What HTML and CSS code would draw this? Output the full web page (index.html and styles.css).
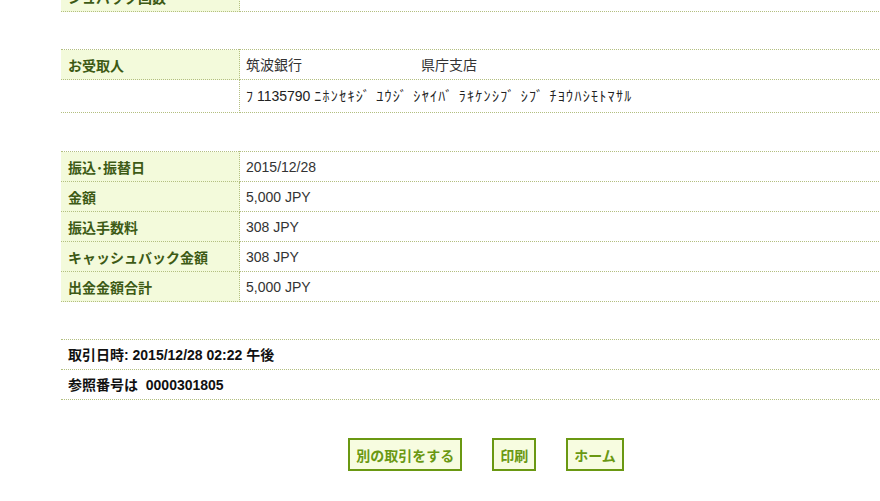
FILE: index.html
```html
<!DOCTYPE html>
<html lang="ja">
<head>
<meta charset="utf-8">
<title>振込確認</title>
<link rel="stylesheet" href="styles.css">
</head>
<body>
<div class="page">
  <table class="info">
    <tr><th>シュバック回数</th><td></td></tr>
  </table>

  <table class="info">
    <tr><th>お受取人</th><td><span class="bank">筑波銀行</span>県庁支店</td></tr>
    <tr class="tall"><th class="blank"></th><td class="kana">ﾌ 1135790 <span class="kk">ﾆﾎﾝｾｷｼﾞ ﾕｳｼﾞ ｼﾔｲﾊﾞ ﾗｷｹﾝｼﾌﾞ ｼﾌﾞ ﾁﾖｳﾊｼﾓﾄﾏｻﾙ</span></td></tr>
  </table>

  <table class="info gap38">
    <tr><th>振込･振替日</th><td>2015/12/28</td></tr>
    <tr><th>金額</th><td>5,000 JPY</td></tr>
    <tr><th>振込手数料</th><td>308 JPY</td></tr>
    <tr><th>キャッシュバック金額</th><td>308 JPY</td></tr>
    <tr><th>出金金額合計</th><td>5,000 JPY</td></tr>
  </table>

  <table class="info plain">
    <tr><td>取引日時: 2015/12/28 02:22 午後</td></tr>
    <tr><td>参照番号は&nbsp; 0000301805</td></tr>
  </table>

  <div class="actions">
    <button class="btn" type="button">別の取引をする</button>
    <button class="btn" type="button">印刷</button>
    <button class="btn" type="button">ホーム</button>
  </div>
</div>
</body>
</html>
```
FILE: styles.css
```css
html, body {
  margin: 0;
  padding: 0;
  background: #ffffff;
}
body {
  overflow: hidden;
  font-family: "Liberation Sans", "Noto Sans CJK JP", sans-serif;
  font-size: 14px;
  color: #333333;
}
.page {
  width: 850px;
  margin-left: 61px;
  margin-top: -19px;
  display: flex;
  flex-direction: column;
  gap: 37px;
}
.info {
  width: 100%;
  border-collapse: collapse;
  border-top: 1px dotted #b3bf80;
}
.info.gap38 {
  margin-top: 1px;
}
.info tr {
  height: 30px;
}
.info tr.tall {
  height: 33px;
}
.info th,
.info td {
  border-bottom: 1px dotted #b3bf80;
  padding: 0 7px;
  vertical-align: middle;
  text-align: left;
  line-height: 18px;
}
.info th {
  width: 164px;
  background: #f3fadb;
  color: #3d5a15;
  font-weight: bold;
  border-right: 1px dotted #b3bf80;
  font-family: "Noto Sans CJK JP", sans-serif;
  font-size: 14px;
}
.info th.blank {
  background: #ffffff;
}
.info td {
  padding-left: 6px;
}
.bank {
  display: inline-block;
  width: 175px;
}
.kana {
  font-size: 14px;
  color: #222222;
}
.kk {
  letter-spacing: 1.3px;
}
.plain td {
  font-weight: bold;
  color: #111111;
  padding-left: 7px;
}
.actions {
  display: flex;
  justify-content: center;
  gap: 30px;
  margin-top: 1px;
}
.btn {
  height: 33px;
  padding: 0 6px;
  border: 2px solid #6a9812;
  background: #f7fce0;
  color: #6a9812;
  font-family: "Noto Sans CJK JP", sans-serif;
  font-weight: bold;
  font-size: 14px;
  cursor: pointer;
}
```
